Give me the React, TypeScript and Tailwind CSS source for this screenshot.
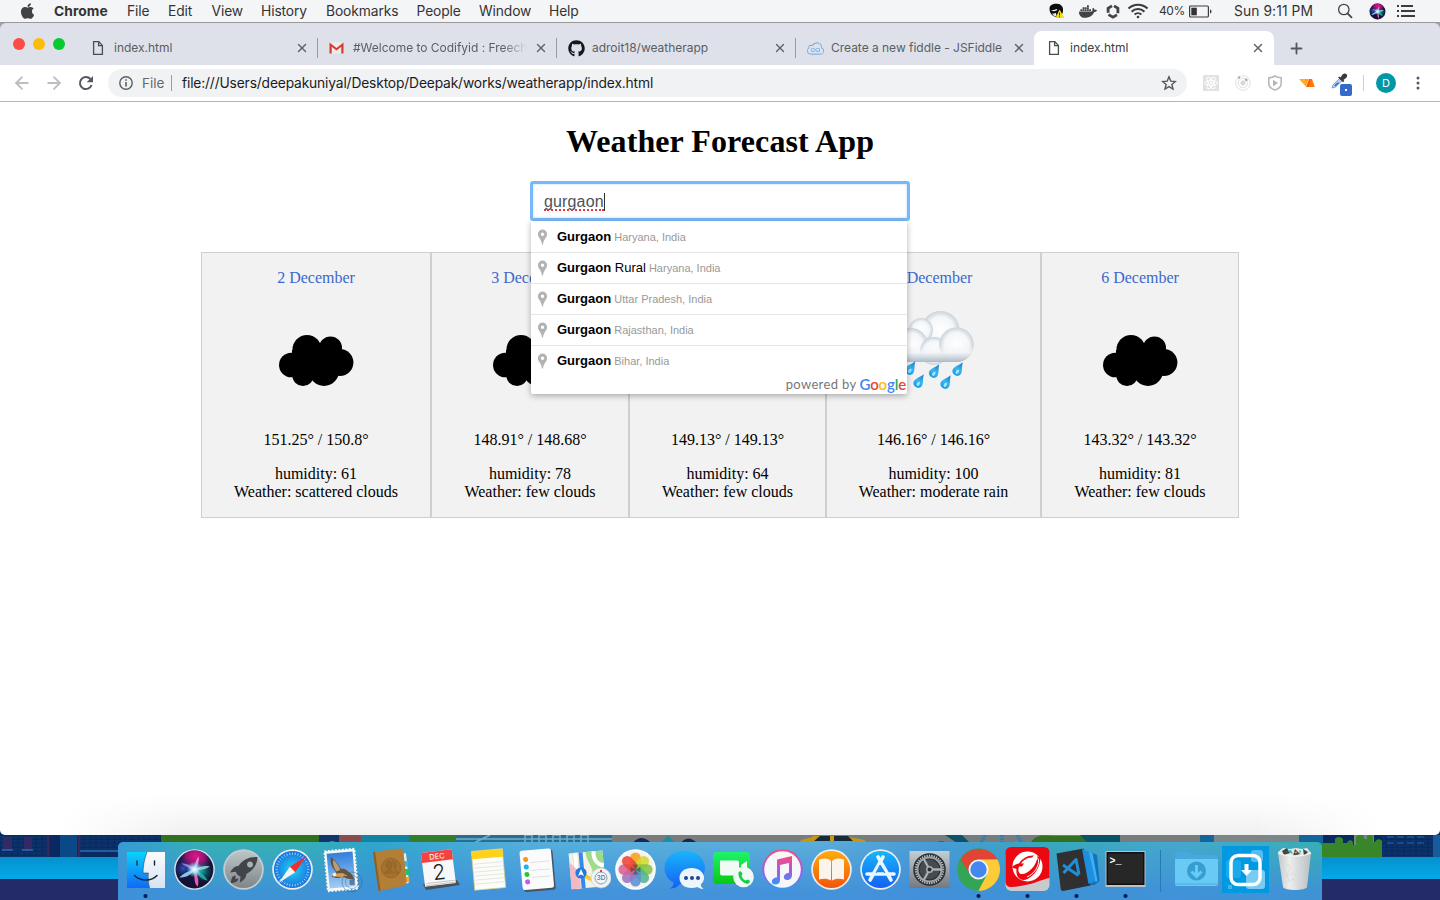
import type { ReactNode } from 'react';
import { FaApple, FaDocker, FaGithub } from 'react-icons/fa';
import { SiJsfiddle } from 'react-icons/si';
import { ArrowLeft, ArrowRight, X, Plus } from 'lucide-react';

const ui = "font-['Inter','Roboto',sans-serif]";

/* ---------- menu bar ---------- */

const menus = [
  { label: 'File', cls: 'w-[41px]' },
  { label: 'Edit', cls: 'w-[43.5px]' },
  { label: 'View', cls: 'w-[49.5px]' },
  { label: 'History', cls: 'w-[65px]' },
  { label: 'Bookmarks', cls: 'w-[90.5px]' },
  { label: 'People', cls: 'w-[62.5px]' },
  { label: 'Window', cls: 'w-[70px]' },
  { label: 'Help', cls: 'w-[40px]' },
];

function MenuBar() {
  return (
    <div className={`relative flex h-[23px] shrink-0 items-center border-b border-[#98989b] bg-[#f4f5f6] text-[13.8px] text-[#333336] ${ui}`}>
      <FaApple className="ml-[20px] h-[18px] w-[15px] shrink-0 text-[#424244]" />
      <span className="ml-[19px] w-[73px] shrink-0 font-bold tracking-[0.05px]">Chrome</span>
      {menus.map((m) => (
        <span key={m.label} className={`shrink-0 whitespace-nowrap tracking-[-0.1px] ${m.cls}`}>{m.label}</span>
      ))}
      <div className="ml-[460px] flex shrink-0 items-center">
        <svg className="h-[16px] w-[16px] shrink-0" viewBox="0 0 16 16">
          <path d="M.5 5.500C.5 2 4 .5 8 .8c4 .3 6 2.700 6 6.200 0 4-2 7-6 7-4.500 0-7.500-4-7.500-8.500Z" fill="#0c0c0c" />
          <path d="M2 7c2 1 4-1 6-1 .8.600-.5 1.800-2 2C4 8.500 2.500 8 2 7Zm1 3.500c2 .5 3-.5 4-.5l.5 3c-2 .5-3.500-.5-4.500-2.500Z" fill="#e8e8e8" />
          <path d="m10.500 6.500 5 8.500h-9Z" fill="#f5df12" />
          <path d="M10 9.500h1v3h-1zM10 13.200h1v1h-1z" fill="#443c00" />
        </svg>
        <FaDocker className="ml-[14px] h-[19px] w-[18px] shrink-0 text-[#434345]" />
        <svg className="ml-[9px] h-[15px] w-[14px] shrink-0" viewBox="0 0 14 15" fill="none" stroke="#434345" strokeWidth="2.800">
          <path d="M6 1.900 2.100 4.200v4.600M2.500 10.600 7 13.200l4-2.300M11.900 9.300V4.200L8 1.900" />
        </svg>
        <svg className="ml-[7px] h-[16px] w-[22px] shrink-0" viewBox="0 0 22 16" fill="none" stroke="#3c3c3e" strokeWidth="2.100">
          <path d="M1.500 5.600a13.500 13.500 0 0 1 19 0M4.600 8.700a9 9 0 0 1 12.800 0M7.600 11.600a5 5 0 0 1 6.800 0" />
          <circle cx="11" cy="14" r="1.300" fill="#3c3c3e" stroke="none" />
        </svg>
        <span className="ml-[10px] w-[30px] shrink-0 text-[12px] tracking-[-0.4px]">40%</span>
        <svg className="h-[13px] w-[24px] shrink-0" viewBox="0 0 24 13">
          <rect x=".6" y="1" width="18.800" height="11" rx="1" fill="none" stroke="#3c3c3e" strokeWidth="1.200" />
          <rect x="2.300" y="2.700" width="5.500" height="7.600" fill="#333" />
          <path d="M21 4.500c2 .5 2 3.500 0 4Z" fill="#3c3c3e" />
        </svg>
        <span className="ml-[21px] w-[103px] shrink-0 whitespace-nowrap tracking-[0.1px]">Sun 9:11 PM</span>
        <svg className="h-[16px] w-[16px] shrink-0" viewBox="0 0 16 16" fill="none" stroke="#444446" strokeWidth="1.300">
          <circle cx="6.800" cy="6.500" r="5.200" /><path d="m10.500 10.300 4.500 4.500" strokeWidth="1.700" />
        </svg>
        <svg className="ml-[16px] h-[17px] w-[17px] shrink-0" viewBox="0 0 34 34"><SiriArt cx={17} cy={17} r={17} /></svg>
        <svg className="ml-[11px] h-[12px] w-[19px] shrink-0" viewBox="0 0 19 12" stroke="#3c3c3e" strokeWidth="1.900">
          <path d="M0 1h2M4 1h12M0 6h2M4 6h14M0 11h2M4 11h14" />
        </svg>
      </div>
    </div>
  );
}

/* ---------- browser chrome ---------- */

function DocIcon() {
  return (
    <svg className="h-[16px] w-[12px] shrink-0" viewBox="0 0 12 16" fill="none" stroke="#4b4d50" strokeWidth="1.300">
      <path d="M1.600 1.700h5.200l3.600 3.700v8.900H1.600Z" />
      <path d="M6.600 1.700v3.900h3.800" />
    </svg>
  );
}

function GmailIcon() {
  return (
    <svg className="h-[12px] w-[15px] shrink-0" viewBox="0 0 15 12">
      <path d="M1 .5h13v11H1Z" fill="#ececec" />
      <path d="M.5 11.500v-11l7 5.500 7-5.500v11h-2.200V4.700L7.500 8.600 2.700 4.700v6.800Z" fill="#d93a2d" />
    </svg>
  );
}

function Tab({ icon, title, cls, fade }: { icon: ReactNode; title: string; cls: string; fade?: boolean }) {
  return (
    <div className={`flex h-[34px] shrink-0 items-center ${cls}`}>
      <div className="flex w-[24px] shrink-0 items-center">{icon}</div>
      <div className={`w-[174px] overflow-hidden whitespace-nowrap ${fade ? '[mask-image:linear-gradient(to_right,#000_86%,transparent)]' : ''}`}>{title}</div>
      <X className="ml-[7px] h-[14px] w-[14px] shrink-0 text-[#5d6065]" strokeWidth={2.4} />
    </div>
  );
}

function TabStrip() {
  return (
    <div className="shrink-0 bg-[#9fa1a5]">
      <div className={`flex h-[42px] items-end rounded-t-[6px] bg-[#dee1e9] text-[12px] tracking-[-0.02px] text-[#5b5e63] ${ui}`}>
        <div className="flex h-[42px] w-[80px] shrink-0 items-center gap-[8px] pl-[13px]">
          <span className="h-3 w-3 rounded-full bg-[#fc4a45]" />
          <span className="h-3 w-3 rounded-full bg-[#fdbc08]" />
          <span className="h-3 w-3 rounded-full bg-[#05cb31]" />
        </div>
        <Tab cls="w-[237px] pl-[10px]" icon={<div className="pl-[2px]"><DocIcon /></div>} title="index.html" />
        <Divider />
        <Tab cls="w-[238px] pl-[11px]" icon={<GmailIcon />} title="#Welcome to Codifyid : Freecharge" fade />
        <Divider />
        <Tab cls="w-[238px] pl-[11px]" icon={<FaGithub className="h-[17px] w-[17px] text-[#181818]" />} title="adroit18/weatherapp" />
        <Divider />
        <Tab cls="w-[238px] pl-[11px]" icon={<SiJsfiddle className="h-[17px] w-[17px] text-[#3d9df0]" />} title="Create a new fiddle - JSFiddle" />
        <div className="flex h-[34px] w-[240px] shrink-0 items-center rounded-t-[8px] bg-white text-[#3c4043]">
          <Tab cls="w-[240px] pl-[12px]" icon={<div className="pl-[2px]"><DocIcon /></div>} title="index.html" />
        </div>
        <div className="flex h-[34px] items-center pl-[14px]">
          <Plus className="h-[17px] w-[17px] text-[#55585d]" strokeWidth={2.6} />
        </div>
      </div>
    </div>
  );
}

function Divider() {
  return <div className="mb-[7px] h-[20px] w-px shrink-0 bg-[#989ba1]" />;
}

function Toolbar() {
  return (
    <div className={`flex h-[37px] shrink-0 items-center border-b border-[#b5b6b8] bg-white text-[14px] ${ui}`}>
      <ArrowLeft className="ml-[12px] h-[20px] w-[20px] shrink-0 text-[#bcbec1]" strokeWidth={2.2} />
      <ArrowRight className="ml-[12px] h-[20px] w-[20px] shrink-0 text-[#bcbec1]" strokeWidth={2.2} />
      <svg className="ml-[14px] h-[16px] w-[16px] shrink-0" viewBox="0 0 16 16">
        <path d="M13.600 10A6 6 0 1 1 12.400 4" fill="none" stroke="#55585d" strokeWidth="2" />
        <path d="M15 1v6.300H8.700Z" fill="#55585d" />
      </svg>
      <div className="ml-[14px] flex h-[28px] w-[1079px] shrink-0 items-center rounded-full bg-[#f1f2f4]">
        <svg className="ml-[11px] h-[14px] w-[14px] shrink-0" viewBox="0 0 14 14">
          <circle cx="7" cy="7" r="6.200" fill="none" stroke="#5b5e63" strokeWidth="1.400" />
          <path d="M6.200 6h1.600v4.500H6.200zM6.200 3.200h1.600v1.600H6.200z" fill="#5b5e63" />
        </svg>
        <span className="ml-[9px] w-[29px] shrink-0 text-[13.500px] text-[#66696e]">File</span>
        <div className="h-[16px] w-px shrink-0 bg-[#9b9da1]" />
        <span className="ml-[10px] w-[979px] shrink-0 whitespace-nowrap text-[13.800px] tracking-[-0.155px] text-[#1b1b1d]">
          file:///Users/deepakuniyal/Desktop/Deepak/works/weatherapp/index.html
        </span>
        <svg className="h-[16px] w-[16px] shrink-0" viewBox="0 0 16 16">
          <path d="m8 1.800 1.800 4.300 4.600.4-3.500 3 1.100 4.600L8 11.600l-4 2.500 1.100-4.600-3.500-3 4.600-.4Z" fill="none" stroke="#55585d" strokeWidth="1.400" />
        </svg>
      </div>
      <svg className="ml-[16px] h-[16px] w-[16px] shrink-0" viewBox="0 0 16 16">
        <rect width="16" height="16" fill="#e1e1e1" />
        <g fill="none" stroke="#fff" strokeWidth="1">
          <ellipse cx="8" cy="8" rx="6.500" ry="2.500" />
          <ellipse cx="8" cy="8" rx="6.500" ry="2.500" transform="rotate(60 8 8)" />
          <ellipse cx="8" cy="8" rx="6.500" ry="2.500" transform="rotate(120 8 8)" />
        </g>
        <circle cx="8" cy="8" r="1.300" fill="#fff" />
      </svg>
      <svg className="ml-[16px] h-[16px] w-[16px] shrink-0" viewBox="0 0 16 16" fill="none" stroke="#e2e2e2">
        <circle cx="8" cy="8" r="7.300" /><circle cx="8" cy="8" r="4.800" /><circle cx="8" cy="8" r="2.300" fill="#d6d6d6" />
        <circle cx="4" cy="2.500" r="1.200" fill="#aaa" stroke="none" /><circle cx="11.200" cy="4.800" r="1.400" fill="#aaa" stroke="none" />
      </svg>
      <svg className="ml-[16px] h-[16px] w-[16px] shrink-0" viewBox="0 0 16 16">
        <path d="M8 1c2 1.300 4 1.700 6.200 1.800v5.400c0 3.200-2.500 5.600-6.200 6.900-3.700-1.300-6.200-3.700-6.200-6.900V2.800C4 2.700 6 2.300 8 1Z" fill="none" stroke="#b9b9b9" strokeWidth="1.600" />
        <path d="M6 4.700 11 8l-5 3.200Z" fill="#b5b5b5" />
      </svg>
      <svg className="ml-[16px] h-[10px] w-[17px] shrink-0" viewBox="0 0 17 10">
        <path d="M.3 1h9.200L6.800 8.200Z" fill="#ff9a16" />
        <path d="M.3 1H6l1.500 5.500-.7 1.700Z" fill="#ffae2a" />
        <path d="M10.200 1H13l2.800 8H7.200Z" fill="#ff7a0c" />
        <path d="M10.200 1 7.200 9h2.600L12 1Z" fill="#ff5e00" />
      </svg>
      <div className="relative ml-[15px] h-[20px] w-[22px] shrink-0">
        <svg className="h-[18px] w-[17px]" viewBox="0 0 17 18">
          <path d="m1 15 1-3 6.500-6.500 2.400 2.400L4.500 14Z" fill="#b9d3f2" stroke="#6c8fc0" strokeWidth=".8" />
          <path d="m3.500 12 3-2.500 2 .2-4.500 4Z" fill="#2b6fd2" />
          <path d="m7 4.500 1.500-1 1 1 2-3c1.500-1.500 3.500-1.300 4.300 0 .7 1.400.2 2.500-.8 3.500l-2.600 2 .9 1-1.200 1.300Z" fill="#3a3a3c" />
        </svg>
        <div className="absolute left-[9px] top-[11px] flex h-[12px] w-[12px] items-center justify-center rounded-[2px] bg-[#336acc]">
          <span className="h-[2px] w-[2px] bg-white" />
        </div>
      </div>
      <div className="ml-[10px] h-[16px] w-px bg-[#cfd0d2]" />
      <div className="ml-[12px] flex h-[20px] w-[20px] shrink-0 items-center justify-center rounded-full bg-[#0097a7] text-[11px] text-white">D</div>
      <svg className="ml-[20px] h-[14px] w-[4px] shrink-0" viewBox="0 0 4 14" fill="#55585d">
        <circle cx="2" cy="2" r="1.500" /><circle cx="2" cy="7" r="1.500" /><circle cx="2" cy="12" r="1.500" />
      </svg>
    </div>
  );
}

/* ---------- page ---------- */

const places = [
  { extra: '', region: 'Haryana, India' },
  { extra: ' Rural', region: 'Haryana, India' },
  { extra: '', region: 'Uttar Pradesh, India' },
  { extra: '', region: 'Rajasthan, India' },
  { extra: '', region: 'Bihar, India' },
];

function SearchBox() {
  return (
    <div className="relative h-[40px] w-[380px] font-['Liberation_Sans',Arial,sans-serif]">
      <div className="flex h-[40px] items-center rounded-[3px] border-[3px] border-[#79b8f8] bg-white pl-[11px] pt-[1px] text-[16px] text-[#4b5259] shadow-[inset_0_0_2px_#9ccbf9]">
        <span className="relative leading-[18px] tracking-[0.15px]">
          gurgaon
          <span className="absolute bottom-0 left-0 w-full border-b-2 border-dotted border-[#f0303a]" />
        </span>
        <span className="h-[18px] w-px bg-[#333]" />
      </div>
      <div className="absolute left-px top-[40px] z-10 h-[173px] w-[376px] rounded-b-[2px] bg-white shadow-[0_2px_6px_rgba(0,0,0,0.3)]">
        {places.map((p, i) => (
          <div key={i} className={`flex h-[31px] items-center ${i ? 'border-t border-[#e6e6e6]' : ''}`}>
            <svg className="ml-[6px] mr-[9px] h-[16px] w-[11px] shrink-0" viewBox="0 0 11 16">
              <path d="M5.500.5a4.600 4.600 0 0 1 4.600 4.700c0 3.600-3.500 4.600-4.100 10.300h-1C4.400 9.800.9 8.800.9 5.200A4.600 4.600 0 0 1 5.500.5Zm0 3a1.700 1.700 0 1 0 0 3.400 1.700 1.700 0 0 0 0-3.400Z" fill="#b3b3b3" fillRule="evenodd" />
            </svg>
            <div className="whitespace-pre text-[11px] text-[#999]">
              <span className="text-[13px] text-black"><b>Gurgaon</b>{p.extra}</span> {p.region}
            </div>
          </div>
        ))}
        <div className="flex h-[17px] items-center justify-end pr-px font-['Lato',sans-serif] text-[13px] text-[#777]">
          <span className="tracking-[0.35px]">powered by</span>
          <span className="ml-[3px] text-[15px] font-semibold tracking-[-0.15px] text-[#4285f4]">
            G<span className="text-[#ea4335]">o</span><span className="text-[#fbbc05]">o</span>g<span className="text-[#34a853]">l</span><span className="text-[#ea4335]">e</span>
          </span>
        </div>
      </div>
    </div>
  );
}

function CloudIcon() {
  return (
    <svg className="h-[144px] w-[100px]" viewBox="0 0 100 144">
      <circle cx="41" cy="62.500" r="14.500" /><circle cx="64.500" cy="61" r="11.500" />
      <circle cx="74" cy="75.500" r="13.400" /><circle cx="25.300" cy="78" r="12.300" />
      <circle cx="37" cy="88.500" r="10.600" /><circle cx="58" cy="84" r="15" />
      <path d="M26 63h48v24H26Z" />
    </svg>
  );
}

function RainIcon() {
  const drops = [[27, 81], [35.500, 94], [51, 84], [62.500, 95], [74.500, 82]];
  return (
    <svg className="h-[144px] w-[100px]" viewBox="0 0 100 144">
      <defs>
        <radialGradient id="puff" cx=".5" cy=".5" r=".5"><stop offset="0" stopColor="#fff" /><stop offset=".7" stopColor="#f4f6f8" /><stop offset="1" stopColor="#c9d2da" /></radialGradient>
        <linearGradient id="shade" x1="0" y1="0" x2="0" y2="1"><stop offset="0" stopColor="#f4f6f8" stopOpacity="0" /><stop offset=".45" stopColor="#f1f3f6" stopOpacity=".9" /><stop offset="1" stopColor="#adbac6" /></linearGradient>
        <linearGradient id="drop" x1="0" y1="0" x2="0" y2="1"><stop offset="0" stopColor="#1679bf" /><stop offset=".55" stopColor="#39b6f1" /><stop offset="1" stopColor="#169be0" /></linearGradient>
      </defs>
      <circle cx="56.500" cy="43" r="19" fill="url(#puff)" />
      <circle cx="37" cy="43" r="12" fill="url(#puff)" />
      <circle cx="27" cy="58" r="17" fill="url(#puff)" />
      <circle cx="50" cy="64" r="14" fill="url(#puff)" />
      <circle cx="72.500" cy="57.700" r="17.300" fill="url(#puff)" />
      <path d="M10 58h79.500c0 10-8 17-17 17H27c-9 0-17-6-17-17Z" fill="url(#shade)" />
      {drops.map(([x, y]) => (
        <g key={x} transform={`translate(${x} ${y}) rotate(32)`}>
          <path d="M0-8C1.500-3.500 4.700 0 4.700 3a4.700 4.200 0 0 1-9.400 0C-4.700 0-1.500-3.500 0-8Z" fill="url(#drop)" />
          <ellipse cx=".5" cy="3" rx="1.500" ry="2.300" fill="#a5e6ff" />
        </g>
      ))}
    </svg>
  );
}

const days = [
  { date: '2 December', temp: '151.25° / 150.8°', humidity: 61, weather: 'scattered clouds', cls: 'w-[230px]' },
  { date: '3 December', temp: '148.91° / 148.68°', humidity: 78, weather: 'few clouds', cls: 'w-[198px]' },
  { date: '4 December', temp: '149.13° / 149.13°', humidity: 64, weather: 'few clouds', cls: 'w-[197px]' },
  { date: '5 December', temp: '146.16° / 146.16°', humidity: 100, weather: 'moderate rain', cls: 'w-[215px]', rain: true },
  { date: '6 December', temp: '143.32° / 143.32°', humidity: 81, weather: 'few clouds', cls: 'w-[198px]' },
];

function Page() {
  return (
    <main className="flex h-[733px] shrink-0 flex-col items-center rounded-b-[5px] bg-white font-['Liberation_Serif','Times_New_Roman',serif] text-black">
      <h1 className="mt-[21px] text-[32px] font-bold leading-[37px] tracking-[0.09px]">Weather Forecast App</h1>
      <div className="mt-[21px]"><SearchBox /></div>
      <div className="mt-[31px] flex h-[266px]">
        {days.map((d) => (
          <div key={d.date} className={`flex flex-col items-center border border-[#cfcfcf] bg-[#f2f2f2] py-[16px] text-[16px] leading-[18px] ${d.cls}`}>
            <div className="text-[#3b68cc]">{d.date}</div>
            {d.rain ? <RainIcon /> : <CloudIcon />}
            <div>{d.temp}</div>
            <div className="mt-[16px]">humidity: {d.humidity}</div>
            <div>Weather: {d.weather}</div>
          </div>
        ))}
      </div>
      <div className="mt-auto h-[40px] w-full rounded-b-[5px] bg-linear-to-b from-white to-[#f0f0f0] [mask-image:linear-gradient(to_right,transparent_4%,#000_13%,#000_87%,transparent_96%)]" />
    </main>
  );
}

/* ---------- desktop ---------- */

function Wallpaper() {
  return (
    <svg className="absolute bottom-0 left-0 h-[75px] w-[1440px]" viewBox="0 825 1440 75">
      <defs>
        <linearGradient id="road" x1="0" y1="0" x2="0" y2="1"><stop offset="0" stopColor="#0590cd" /><stop offset="1" stopColor="#04aaea" /></linearGradient>
        <pattern id="brick" width="6" height="4" patternUnits="userSpaceOnUse"><path d="M0 0h6M1 2h4" stroke="#123f76" strokeWidth=".8" /></pattern>
      </defs>
      <path d="M0 825h1440v33H0z" fill="#092a60" />
      <path d="M0 835h46v22H0zM80 835h80v16H80z" fill="url(#brick)" />
      <path d="M3 837h9v13H3zM24 837h8v13h-8z" fill="#332966" />
      <path d="M2 850h11M22 850h11M80 851h81" stroke="#286fb5" strokeWidth="1.500" />
      <path d="M60 835h17v22H60z" fill="#0b4887" />
      <path d="M48 835v22M79 835v22" stroke="#3b285b" strokeWidth="2.500" />
      <path d="M161 835h158v10H161z" fill="#31701f" />
      <path d="M319 835h20v10h-20z" fill="#10366a" /><path d="M339 835h22v10h-22z" fill="#874c50" />
      <path d="M326 845q6-8 13 0z" fill="#5c9e1d" />
      <path d="M361 835h48v10h-48z" fill="#1483a3" /><path d="M409 835h47v10h-47z" fill="#347d2c" />
      <path d="M456 835h156v10H456z" fill="#286e92" />
      <path d="M456 839h156M470 845l20-10M525 844v-9h7v9M539 844v-9h7v9M553 844v-9h7v9M567 844v-9h7v9M581 844v-9h7v9" stroke="#74afc8" strokeWidth="1.500" fill="none" />
      <path d="M612 835h595v10H612z" fill="#777c7f" />
      <path d="M631 845q10-14 22 0zM679 845q9-13 20 0z" fill="#192753" /><path d="m662 842 6-7 6 7Z" fill="#208e9a" />
      <path d="M798 845c2-8 10-5 16-9h34c4 4 18 0 20 9Z" fill="#c89613" />
      <path d="m814 841 6-5h10v5zM834 836h14l5 5h-19z" fill="#152b3b" />
      <path d="M935 845c4-7 10-3 17 0zM1030 845c4-13 18-9 24-9h26c14-1 26 0 29 9Z" fill="#356f22" />
      <path d="m945 835 15 10h12l-10-10zM1080 835h40v10h-30z" fill="#0c5269" />
      <path d="m985 835-5 10M1002 835v10M1017 835l6 10" stroke="#2f7fb2" strokeWidth="4" strokeDasharray="2 1" />
      <path d="M1200 835h15v10h-15zM1299 835h24v22h-24z" fill="#15649c" />
      <path d="M1214 835h85v22h-85zM1354 835h20v22h-20z" fill="#7c8588" />
      <path d="M1318 857h64v-16c-2-3-6-2-7 1h-2v-6c-2-2-5-2-6 0v3h-3v-3c-3-3-7-2-8 1v8h-3v-3c-2-3-5-2-6 1h-4v-4c-3-3-7-2-8 0v4h-17Z" fill="#378629" />
      <path d="M1382 835h51v22h-51z" fill="url(#brick)" />
      <path d="M1387 837h40M1387 843h40" stroke="#2269a9" strokeDasharray="7 3" />
      <path d="M1433 835h7v22h-7z" fill="#175b9d" />
      <path d="M0 857h1440v22H0z" fill="url(#road)" />
      <path d="M0 879.500h1440V900H0z" fill="#242c68" />
    </svg>
  );
}

function SiriArt({ cx, cy, r }: { cx: number; cy: number; r: number }) {
  return (
    <g transform={`translate(${cx} ${cy}) scale(${r / 20})`}>
      <defs>
        <radialGradient id="siri-top" gradientUnits="userSpaceOnUse" cx="1" cy="-13" r="17"><stop offset="0" stopColor="#e5138c" /><stop offset=".55" stopColor="#a3157f" stopOpacity=".85" /><stop offset="1" stopColor="#4b1560" stopOpacity="0" /></radialGradient>
        <radialGradient id="siri-left" gradientUnits="userSpaceOnUse" cx="-11" cy="-1" r="11"><stop offset="0" stopColor="#2f58cf" stopOpacity=".9" /><stop offset="1" stopColor="#1c1c60" stopOpacity="0" /></radialGradient>
        <radialGradient id="siri-right" gradientUnits="userSpaceOnUse" cx="8" cy="2" r="11"><stop offset="0" stopColor="#14b7a9" stopOpacity=".85" /><stop offset="1" stopColor="#093e58" stopOpacity="0" /></radialGradient>
        <radialGradient id="siri-glow" gradientUnits="userSpaceOnUse" cx="0" cy="0" r="8"><stop offset="0" stopColor="#fff" /><stop offset=".4" stopColor="#b9f3ff" stopOpacity=".85" /><stop offset="1" stopColor="#73caff" stopOpacity="0" /></radialGradient>
      </defs>
      <circle r="20" fill="#dfe2ea" />
      <circle r="18.600" fill="#121334" />
      <circle r="18.600" fill="url(#siri-top)" /><circle r="18.600" fill="url(#siri-left)" /><circle r="18.600" fill="url(#siri-right)" />
      <path d="M0 0c3 5 5 12 3 17C-1 13 0 6 0 0Z" fill="#f056b9" />
      <path d="M0 0c6 2 11 7 13 11C7 10 2 5 0 0Z" fill="#27c7b1" fillOpacity=".75" />
      <path d="M0 0c-4 1-10 3-15 8 7 0 12-3 15-8Z" fill="#9fe1ff" fillOpacity=".85" />
      <path d="M0 0c0-4 1-9 4-13 1 5-1 10-4 13Z" fill="#ffb7e8" fillOpacity=".75" />
      <path d="M0 0c-5-1-9-3-13-6 6 0 11 2 13 6Z" fill="#c9b0ff" fillOpacity=".6" />
      <path d="M0 0c5-3 10-4 15-3-4 3-9 4-15 3Z" fill="#b6fff4" fillOpacity=".7" />
      <circle r="8" fill="url(#siri-glow)" />
    </g>
  );
}

function Slot({ children, running }: { children: ReactNode; running?: boolean }) {
  return (
    <svg className="h-[58px] w-[49.030px] shrink-0" viewBox="0 0 49 58">
      {children}
      {running && <circle cx="24.500" cy="54" r="2.100" fill="#0b1a55" />}
    </svg>
  );
}

function Disc({ fill, ring = '#eceef0' }: { fill: string; ring?: string }) {
  return (<><circle cx="24.500" cy="27.500" r="20.300" fill={ring} /><circle cx="24.500" cy="27.500" r="18.600" fill={fill} /></>);
}

const spokes = Array.from({ length: 24 }, (_, i) => i * 15);
const ticks = Array.from({ length: 36 }, (_, i) => i * 10);
const petals = ['#f99e1c', '#d3d92b', '#84c441', '#50b692', '#5b8fd6', '#9b74c4', '#d9608f', '#ee4437'];

function Dock() {
  return (
    <div className="relative mx-auto mt-[7px] flex h-[58px] w-[1204px] shrink-0 rounded-t-[5px] bg-[linear-gradient(to_bottom,transparent,rgba(64,142,218,0.850)_85%),linear-gradient(to_right,#359bd6,#36b0b4_7%,#36b0b4_15%,#2ea6cb_21%,#54afdd_34%,#5badda_58%,#479bd5_68%,#37a8ba_78%,#46a8ce_88%,#35b0b4)] pl-[2.500px]">
      <svg className="absolute h-0 w-0">
        <defs>
          <linearGradient id="blue" x1="0" y1="0" x2="0" y2="1"><stop offset="0" stopColor="#18b5fc" /><stop offset="1" stopColor="#1460f2" /></linearGradient>
          <linearGradient id="cyan" x1="0" y1="0" x2="0" y2="1"><stop offset="0" stopColor="#08d3fb" /><stop offset="1" stopColor="#1269f8" /></linearGradient>
          <radialGradient id="compass"><stop offset="0" stopColor="#1fd4f7" /><stop offset="1" stopColor="#1b72dc" /></radialGradient>
          <linearGradient id="face" x1="0" y1="0" x2="0" y2="1"><stop offset="0" stopColor="#fbfbfc" /><stop offset="1" stopColor="#d7e3f2" /></linearGradient>
          <linearGradient id="grey" x1="0" y1="0" x2="0" y2="1"><stop offset="0" stopColor="#bcc6c9" /><stop offset="1" stopColor="#7f8589" /></linearGradient>
          <linearGradient id="sky" x1="0" y1="0" x2="0" y2="1"><stop offset="0" stopColor="#2f7fdc" /><stop offset="1" stopColor="#a4cdf2" /></linearGradient>
          <linearGradient id="orange" x1="0" y1="0" x2="0" y2="1"><stop offset="0" stopColor="#ffac0c" /><stop offset="1" stopColor="#f55308" /></linearGradient>
          <linearGradient id="tune" x1="0" y1="0" x2="0" y2="1"><stop offset="0" stopColor="#fb4b76" /><stop offset=".55" stopColor="#a05be8" /><stop offset="1" stopColor="#2e9bf3" /></linearGradient>
          <linearGradient id="green" x1="0" y1="0" x2="0" y2="1"><stop offset="0" stopColor="#1df36c" /><stop offset="1" stopColor="#08c90f" /></linearGradient>
          <linearGradient id="silver" x1="0" y1="0" x2="0" y2="1"><stop offset="0" stopColor="#c3ced5" /><stop offset="1" stopColor="#74797e" /></linearGradient>
          <linearGradient id="bin" x1="0" y1="0" x2="1" y2="0"><stop offset="0" stopColor="#c4c8ca" /><stop offset=".35" stopColor="#eceded" /><stop offset="1" stopColor="#b9bfc3" /></linearGradient>
        </defs>
      </svg>

      <Slot running>
        <path d="M6 10h38v36H6z" fill="url(#face)" />
        <path d="M6 10h20c-3 8-4 15-4 21h5c0 5 0 10 1.500 15H6Z" fill="url(#cyan)" />
        <path d="M26 10c-3 8-4 15-4 21h5.500c-.5 5 0 10 1 15" fill="none" stroke="#12304e" strokeWidth=".5" />
        <path d="M16 19v4M33.500 19v4M13.500 33.500c6 6 17 6 22.500 0" fill="none" stroke="#10243c" strokeWidth="1.400" strokeLinecap="round" />
      </Slot>
      <Slot><SiriArt cx={24.500} cy={27.500} r={20.300} /></Slot>
      <Slot>
        <Disc fill="url(#grey)" ring="#c5cdd1" />
        <path d="M38.500 15c-9-.5-15 3-19 9-3-.5-6 2-8.500 6.500l6-.7c0 2 2 4 4.500 4.700l-.7 6c4-2 6.500-5 6.500-8.500 7-4 11-9 11.200-17Z" fill="#414549" />
        <circle cx="31" cy="22.500" r="2.900" fill="#aab0b4" /><path d="M16.500 33.500c-3 0-4.500 3-4.500 7.500 4 0 7-1.500 7.500-4.500l-3 .5Z" fill="#414549" />
      </Slot>
      <Slot>
        <Disc fill="url(#compass)" />
        {ticks.map((a) => <path key={a} d="M24.500 10.500v2.200" stroke="#c5ecff" strokeWidth=".7" transform={`rotate(${a} 24.500 27.500)`} />)}
        <path d="M38.500 14 21.800 24.800l5.400 5.400Z" fill="#f32e31" /><path d="m10.500 41 11.300-16.200 5.400 5.400Z" fill="#f4f4f4" />
      </Slot>
      <Slot>
        <g transform="rotate(-5 24 27)">
          <path d="M9 8h30v40H9z" fill="#f8f8f6" stroke="#f8f8f6" strokeWidth="2" strokeDasharray="2 1.500" />
          <path d="M11 10.500h26v35H11z" fill="url(#sky)" />
          <path d="M15 14c3 3 7 8 9 13 4-1 6 2 10 6l3 6c-4 0-9-3-12-4-4 1-7 1-11-1 2-2 4-2 5-4-3-4-6-9-4-16Z" fill="#65523f" />
          <path d="M17 17c3 3 6 8 6 11l-4 1c-2-4-3-8-2-12Z" fill="#b99d77" /><path d="m18 31 7 0 5 3-6 1-7-1Z" fill="#cfa054" /><path d="M15 31l3-1 1 3-3 1Z" fill="#f4efdf" />
        </g>
        <g fill="none" stroke="#345980" strokeOpacity=".55" strokeWidth=".8"><circle cx="35" cy="40" r="10" /><circle cx="35" cy="40" r="6.500" /></g><path d="M32.500 38h5v5h-5z" fill="#283f62" fillOpacity=".55" />
      </Slot>
      <Slot>
        <path d="m36 11 4 .5 3 29-7 3z" fill="#eee" /><path d="m38 19 4 .3.400 5-4 .5z" fill="#31b7e8" /><path d="m39 27 4-.2.400 6-4 .5z" fill="#15c863" /><path d="m39 35 4-.2.400 5-4 .5z" fill="#f4a52a" />
        <path d="m7 10 27-3.500q3 0 3.500 3l3 30q0 4-3 4.500L12.500 49Z" fill="#b37e36" /><path d="m7 10 2-.3 5.500 38.800-2 .5Z" fill="#8a5f29" />
        <circle cx="25" cy="26" r="9.800" fill="#a6732f" stroke="#8f652c" strokeWidth=".8" /><path d="M18.500 32c0-3 3.500-2.500 3.500-4.500-3-4-2-8.500 1-8.500s4 5 1.500 8.500c0 2 3 1.500 4 4M26 19c4-1 5 4.500 2.500 8.500 0 2 3 1.500 4 3.500l-2 1.500" fill="#976a2c" stroke="#8a6029" strokeWidth=".6" />
      </Slot>
      <Slot>
        <path d="m8 42 34-4 3 5-34 5Z" fill="#48505a" />
        <g transform="rotate(-7 24 27)"><path d="M8 9h31v34H8z" fill="#f8f8f8" /><path d="M8 9h31v10H8z" fill="#f5413f" /><path d="M9 42h30M10 40h28" stroke="#c4c4c4" /><text x="23.500" y="16.800" fontSize="7.500" textAnchor="middle" fill="#fff" fontFamily="Inter">DEC</text><text x="23.500" y="37.500" fontSize="21" fontWeight="300" textAnchor="middle" fill="#222" fontFamily="Inter">2</text></g>
      </Slot>
      <Slot>
        <g transform="rotate(-5 24 27)"><path d="M9 8h31v39H9z" fill="#fcfcf8" stroke="#ddcf86" strokeWidth=".7" /><path d="M9 8h31v8H9z" fill="#ffd119" /><path d="M10 21h29M10 25h29M10 29h29M10 33h29M10 37h29M10 41h29" stroke="#dcdcd8" strokeWidth=".7" /></g>
      </Slot>
      <Slot>
        <g transform="rotate(-5 24 27)"><rect x="9.500" y="9" width="31.500" height="40" rx="2.500" fill="#475563" /><rect x="8" y="7.500" width="31.500" height="39.500" rx="2.500" fill="#fbfbfb" />
          <path d="M18 20h19M18 28h19M18 35h19" stroke="#d1d5d8" strokeWidth=".7" />
          <circle cx="13.500" cy="16.500" r="2.500" fill="#ff9318" /><circle cx="13.500" cy="24" r="2.500" fill="#20aff5" /><circle cx="13.500" cy="31.500" r="2.500" fill="#22c939" /><circle cx="13.500" cy="39" r="2.500" fill="#c35af0" /></g>
      </Slot>
      <Slot>
        <g transform="rotate(-5 24 27)"><path d="M8 10h34v36H8z" fill="#f4f1e5" /><path d="M25 10h17v24H30c2-9-5-13-5-24Z" fill="#9edc8b" /><path d="M33 10c-1 9 2 13 9 15" fill="none" stroke="#fff" strokeWidth="4" /><path d="M12 10h5v36h-5z" fill="#fff" stroke="#ccc" strokeWidth=".5" /><path d="M8 19l9 10v17H8z" fill="#f4b8c4" /><path d="M20 10v36" stroke="#3688ea" strokeWidth="4" /><path d="m22 31 16 11h-5l-11-6z" fill="#f9c52f" /></g>
        <circle cx="19" cy="31" r="5.600" fill="#2379de" /><path d="m19 27 3 7-3-1.500-3 1.500Z" fill="#fff" />
        <circle cx="39" cy="36" r="10" fill="#f2f3f5" stroke="#c9ccd0" strokeWidth=".6" /><circle cx="39" cy="36" r="6" fill="none" stroke="#86a4bb" /><text x="39" y="38.300" fontSize="6.500" textAnchor="middle" fill="#405666" fontFamily="Inter">3D</text><path d="M38 28h2v2h-2z" fill="#ef4131" />
      </Slot>
      <Slot>
        <Disc fill="#f2f2f0" ring="#fff" />
        {petals.map((c, i) => <rect key={c} x="19.200" y="10.500" width="10.600" height="17" rx="5.300" fill={c} fillOpacity=".88" transform={`rotate(${i * 45} 24.500 27.500)`} />)}
        <path d="m24.500 27.500-3-5h6zM24.500 27.500l5 3v-6zM24.500 27.500l-3 5h6zM24.500 27.500l-5 3v-6z" fill="#365341" fillOpacity=".6" />
      </Slot>
      <Slot>
        <path d="M25 9C12 9 4.500 16 4.500 26c0 7 4 12 9 14.500 0 3-1 5-4 6 5 0 8-1.500 10.500-4.500 16 2 25-6 25-16S36 9 25 9Z" fill="url(#blue)" />
        <path d="M31.500 26c-7 0-12 4-12 10s5 10 12 10c2 0 4-.3 6-1 2 1.500 4 2 6 2-2-1.500-3-3-2.500-5 2-1.500 3-4 3-6 0-6-5.500-10-12.500-10Z" fill="#eff5fc" />
        <circle cx="26" cy="36" r="2" fill="#174a90" /><circle cx="32" cy="36" r="2" fill="#174a90" /><circle cx="38" cy="36" r="2" fill="#174a90" />
      </Slot>
      <Slot>
        <rect x="4" y="10" width="37" height="32" rx="4" fill="url(#green)" /><path d="M11 18.500h17q2 0 2 2v13H13q-2 0-2-2zM32 23l6-4v14l-6-3z" fill="#effbf4" />
        <circle cx="34.500" cy="35" r="10.300" fill="#f2f8f5" /><path d="M29.500 30.500c1.500-2 3-1.500 4 1.500l-1 2c1 2.500 2 3.500 4 4.500l2-1c3 1 3 2.500 1 4-4 1.500-11-5-10-11Z" fill="#17ce49" />
      </Slot>
      <Slot>
        <circle cx="24.500" cy="27.500" r="20.300" fill="url(#tune)" /><circle cx="24.500" cy="27.500" r="18.300" fill="#f7f7f9" />
        <path d="M19 17.500 34 14v19c0 3-2 5-5 5s-4-3-2.500-5 3-2 4.500-2.300V21l-9 2v15c0 3-2 4.500-5 4.500s-4-3-2.500-5 3-2 4.500-2.300Z" fill="url(#tune)" />
      </Slot>
      <Slot><Disc fill="url(#orange)" /><path d="M24 19c-3-3-8-3-12-1.500v20c4-1 9-1 12 1ZM25 19c3-3 8-3 12-1.500v20c-4-1-9-1-12 1Z" fill="#fbf4ec" /></Slot>
      <Slot>
        <Disc fill="url(#blue)" />
        <path d="m27 15-13 23M22 15l13 23M11 32h27" stroke="#e9f8ff" strokeWidth="3.600" strokeLinecap="round" /><path d="m20 31 4-8 5 8" fill="none" stroke="#1c80ef" strokeWidth="1" />
      </Slot>
      <Slot>
        <path d="M4.500 9h40v37h-40z" fill="url(#silver)" /><circle cx="24.500" cy="27.500" r="16.300" fill="#292d30" />
        {ticks.map((a) => <path key={a} d="M24.500 12.700v2.300" stroke="#bfc5c8" strokeWidth="1.300" transform={`rotate(${a} 24.500 27.500)`} />)}
        <circle cx="24.500" cy="27.500" r="12" fill="none" stroke="#9aa1a4" strokeWidth="2" /><circle cx="24.500" cy="27.500" r="10" fill="#464b4f" /><path d="M24.500 27.500H37M24.500 27.500l-6-11M24.500 27.500l-6 11" stroke="#a8b0b4" strokeWidth="2.300" /><circle cx="24.500" cy="27.500" r="3.500" fill="#a8b0b4" /><circle cx="24.500" cy="27.500" r="2" fill="#292d30" />
      </Slot>
      <Slot running>
        <circle cx="24.500" cy="27.500" r="21.300" fill="#34a456" />
        <path d="M6.500 17.500A21.300 21.300 0 0 1 43.500 17.500H24.500a10 10 0 0 0-9 13.500Z" fill="#e14434" /><path d="M24.500 17.500h19a21.300 21.300 0 0 1-19 31.300L33 32.500Z" fill="#fdcb38" />
        <circle cx="24.500" cy="27.500" r="10" fill="#f3f3f3" /><circle cx="24.500" cy="27.500" r="8.200" fill="#4587ef" />
      </Slot>
      <Slot running>
        <rect x="2.500" y="8" width="44" height="41" rx="6" fill="#c8cacd" /><path d="M8.500 5h32q6 0 6 6v25C36 38 28 44 8 45q-5.500 0-5.500-6V11q0-6 6-6Z" fill="#ed0710" />
        <circle cx="24.500" cy="24.500" r="15" fill="#fff" />
        <path d="M9 25.500c1-2 4-3.500 7-4 3-5 9-8.500 15-8l-2 2c-5 0-9 3-11 6h3l-2 3h-3c-2 6 1 9 6 7 7-3 12-10 12.500-17.500l3 2C37 25 32 33 24.500 37c-7 3-12-2-11-10Z" fill="#ed0710" />
        <path d="M30 14.500c4 0 6 2 5.500 6-1 6-5 11.500-11.500 14.500" fill="none" stroke="#fff" strokeWidth="1" />
      </Slot>
      <Slot running>
        <path d="m39 10 6 3 2.500 26-5 4-20 .5 15-6Z" fill="#1273bd" />
        <path d="m4.500 11.500 27-5 7 37-27.500 5.500q-2 0-2.300-2Z" fill="#303033" />
        <path d="m30 7 7 3 6.500 29-7 3Z" fill="#1e8ede" /><path d="m37 10 3.500 1 5 28-2 1Z" fill="#3db0f5" />
        <path d="m11 23 15.500 10.500M11.500 31l12.500-13.500 3 15" fill="none" stroke="#1f8fd6" strokeWidth="3" strokeLinejoin="round" />
      </Slot>
      <Slot running>
        <path d="M4.500 9h40v36h-40z" fill="#b7c4c7" /><path d="M5.500 10h38v33h-38z" fill="#111" /><path d="M7 11.500h35v30H7z" fill="#272727" /><text x="8.500" y="21.500" fontFamily="Liberation Mono" fontSize="10" fontWeight="700" fill="#fff">&gt;_</text>
      </Slot>
      <div className="mx-[10.500px] mt-[8px] h-[42px] w-px shrink-0 bg-[#247bb5]" />
      <Slot>
        <path d="M3 13q0-3 3-3h11l3 3h23q3 0 3 3v28H3Z" fill="#45a9dd" /><path d="M3 17h43v24q0 3-3 3H6q-3 0-3-3Z" fill="#68caf5" /><path d="M3 42h43" stroke="#54b6e5" strokeWidth="1.500" />
        <circle cx="24.500" cy="29" r="9.500" fill="#369fcf" /><path d="M24.500 23v11m-5-4.500 5 5 5-5" fill="none" stroke="#68caf5" strokeWidth="3" />
      </Slot>
      <Slot>
        <path d="M1 4h47v47H1z" fill="#0299e3" /><rect x="30" y="8" width="12" height="12" rx="3" fill="#54bdf0" /><rect x="25" y="28" width="19" height="19" rx="3" fill="#7acbf2" /><rect x="5" y="18" width="15" height="18" rx="3" fill="#1aaaee" /><path d="M7 43h4v4H7z" fill="#42b5ec" />
        <rect x="10" y="13.500" width="29" height="29" rx="7" fill="none" stroke="#fff" strokeWidth="3.500" /><path d="M23.500 22h4v6h3.500L25.500 34 20 28h3.500z" fill="#fff" />
      </Slot>
      <Slot>
        <path d="m8 10 5-4 7 1 6-1 6 1 5-1 4 5-4 6H12Z" fill="#e7e7e3" /><path d="m12 9 5-3 3 5-6 2ZM25 7l5 5-7 2ZM33 7l5 3-4 4Z" fill="#3a4846" /><path d="m17 9 4-1 2 4ZM29 8l2 1-1 3Z" fill="#2fb6ba" /><path d="m24 10 4-1-2 3Z" fill="#ce8e52" />
        <path d="M8 11c8 4 25 4 33 0l-4 34c-1 4-23 4-24 0Z" fill="url(#bin)" /><path d="M8 11c8 4 25 4 33 0" fill="none" stroke="#f3f3f3" strokeWidth="1.300" /><path d="m13 20 8 5-5 9 8-3 7 8 3-12-7 2 7-10M16 40l8-3 7 8M14 26l5 12" fill="none" stroke="#d5d8da" strokeWidth=".8" />
      </Slot>
    </div>
  );
}

export default function App() {
  return (
    <div className="relative flex h-[900px] w-[1440px] flex-col overflow-hidden bg-[#092a60]">
      <Wallpaper />
      <div className="relative flex shrink-0 flex-col">
        <MenuBar />
        <TabStrip />
        <Toolbar />
        <Page />
      </div>
      <Dock />
    </div>
  );
}
